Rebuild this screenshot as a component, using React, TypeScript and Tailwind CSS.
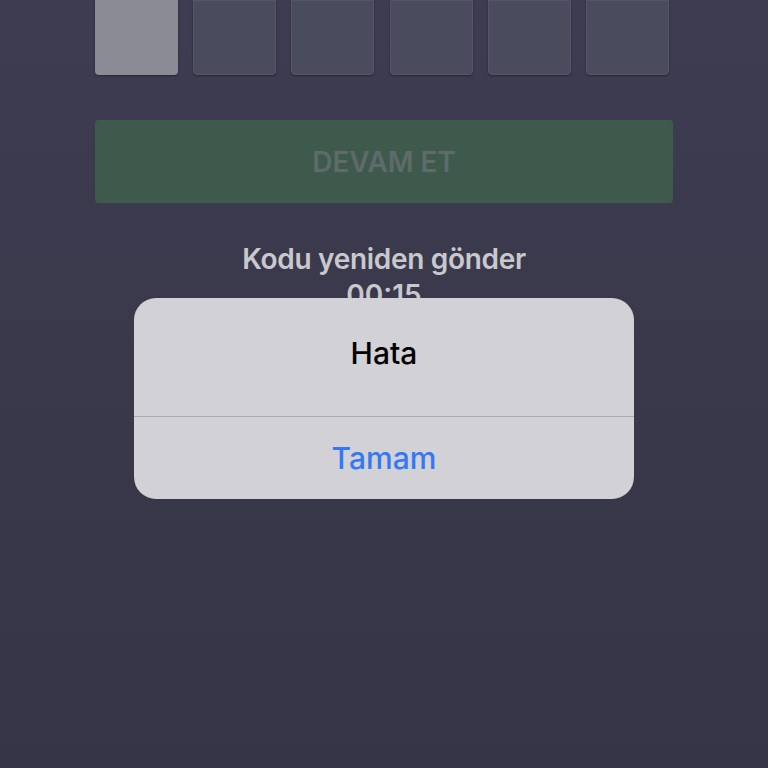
import React from 'react';

const DIGITS = ['', '', '', '', '', ''];

export default function App() {
  return (
    <div
      className="relative h-[768px] w-[768px] overflow-hidden bg-gradient-to-b from-[#3d3c50] to-[#363547]"
      style={{ fontFamily: 'Inter, "Noto Sans", sans-serif' }}
    >
      {/* Code inputs */}
      <div className="flex gap-[15.2px] pl-[95px]">
        {DIGITS.map((d, i) => (
          <div
            key={i}
            className={
              i === 0
                ? 'h-[75px] w-[83px] rounded-b-[4px] bg-[#8b8b96] shadow-[0_1px_2px_rgba(0,0,0,0.35)]'
                : 'h-[75px] w-[83px] rounded-b-[4px] border border-[#55566a] bg-[#4a4b5d] shadow-[0_1px_2px_rgba(0,0,0,0.35)]'
            }
          >
            {d}
          </div>
        ))}
      </div>

      {/* Continue button */}
      <div className="mx-[95px] mt-[45px] flex h-[83px] items-center justify-center rounded-[4px] bg-[#3e5a4c]">
        <span className="text-[28px] font-semibold tracking-[-0.1px] text-[#5f6a6b]">DEVAM ET</span>
      </div>

      {/* Resend */}
      <div className="mt-[38px] flex flex-col items-center text-[#c9c9cd]">
        <span className="text-[28px] font-semibold leading-[36px] tracking-[-0.3px]">Kodu yeniden gönder</span>
        <span className="text-[28px] font-semibold leading-[36px]">00:15</span>
      </div>

      {/* Alert */}
      <div className="absolute left-[134px] top-[298px] w-[500px] overflow-hidden rounded-[22px] bg-[#d1d1d6]">
        <div className="flex h-[118px] items-center justify-center pb-[7px]">
          <span className="text-[30px] font-medium text-black">Hata</span>
        </div>
        <div className="h-px bg-[#a9a9ae]" />
        <div className="flex h-[82px] items-center justify-center">
          <span className="text-[30px] font-medium text-[#3478f6]">Tamam</span>
        </div>
      </div>
    </div>
  );
}
